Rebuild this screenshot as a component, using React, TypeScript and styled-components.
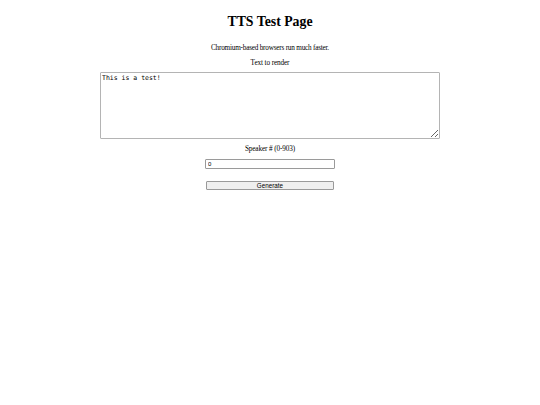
import React, { useState } from 'react'
import styled, { createGlobalStyle } from 'styled-components'

const GlobalStyle = createGlobalStyle`
  html, body {
    margin: 0;
    padding: 0;
    background: #ffffff;
  }
  body {
    font-family: 'Liberation Serif', 'Times New Roman', serif;
    color: #000000;
  }
`

const Page = styled.div`
  display: flex;
  flex-direction: column;
  align-items: center;
  padding-top: 13px;
  text-align: center;
`

const Title = styled.h1`
  margin: 0 0 13px;
  font-size: 13.8px;
  font-weight: bold;
  line-height: 18px;
`

const Note = styled.p`
  margin: 0 0 6px;
  font-size: 7.2px;
  letter-spacing: -0.2px;
  line-height: 9px;
`

const Label = styled.label<{ $gap: number }>`
  display: block;
  font-size: 7.2px;
  letter-spacing: -0.1px;
  line-height: 9px;
  margin-bottom: ${(p) => p.$gap}px;
`

const TextBox = styled.textarea`
  box-sizing: border-box;
  width: 340px;
  height: 67px;
  margin: 0 0 6px;
  padding: 1px;
  font-family: 'DejaVu Sans Mono', 'Liberation Mono', monospace;
  font-size: 6.5px;
  line-height: 8px;
  border: 1px solid #b4b4b4;
  border-radius: 1px;
  resize: both;
`

const NumberInput = styled.input`
  box-sizing: border-box;
  width: 130px;
  height: 10px;
  margin: 0 0 12px;
  padding: 0 2px;
  font-family: 'Liberation Sans', Arial, sans-serif;
  font-size: 6px;
  border: 1px solid #9a9a9a;
  border-radius: 1px;
`

const Button = styled.button`
  box-sizing: border-box;
  width: 128px;
  height: 9px;
  padding: 0;
  font-family: 'Liberation Sans', Arial, sans-serif;
  font-size: 6.3px;
  line-height: 7px;
  color: #000;
  background: #efefef;
  border: 1px solid #9a9a9a;
  border-radius: 1px;
`

const App: React.FC = () => {
  const [text, setText] = useState('This is a test!')
  const [speaker, setSpeaker] = useState('0')

  return (
    <>
      <GlobalStyle />
      <Page>
        <Title>TTS Test Page</Title>
        <Note>Chromium-based browsers run much faster.</Note>
        <Label htmlFor="text" $gap={4}>Text to render</Label>
        <TextBox id="text" value={text} onChange={(e) => setText(e.target.value)} />
        <Label htmlFor="speaker" $gap={5}>Speaker # (0-903)</Label>
        <NumberInput
          id="speaker"
          type="text"
          value={speaker}
          onChange={(e) => setSpeaker(e.target.value)}
        />
        <Button>Generate</Button>
      </Page>
    </>
  )
}

export default App
